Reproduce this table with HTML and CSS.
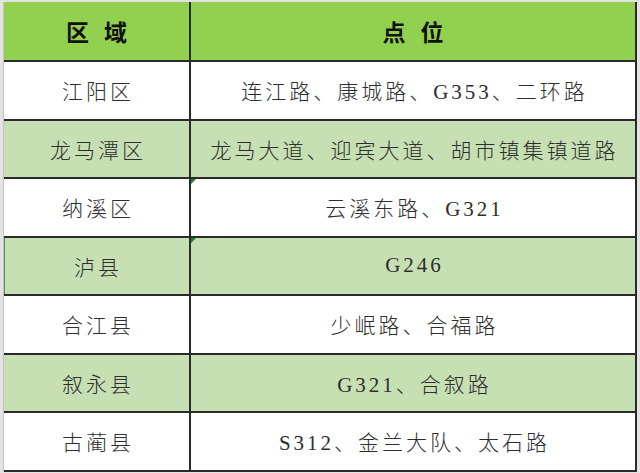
FILE: index.html
```html
<!DOCTYPE html>
<html lang="zh-CN">
<head>
<meta charset="utf-8">
<title>区域点位</title>
<link rel="stylesheet" href="styles.css">
</head>
<body>
<div class="sheet">
  <div class="grid">
    <div class="cell head">区 域</div>
    <div class="cell head">点 位</div>

    <div class="cell">江阳区</div>
    <div class="cell">连江路、康城路、G353、二环路</div>

    <div class="cell alt">龙马潭区</div>
    <div class="cell alt">龙马大道、迎宾大道、胡市镇集镇道路</div>

    <div class="cell">纳溪区</div>
    <div class="cell flag">云溪东路、G321</div>

    <div class="cell alt selected">泸县</div>
    <div class="cell alt flag">G246</div>

    <div class="cell">合江县</div>
    <div class="cell">少岷路、合福路</div>

    <div class="cell alt">叙永县</div>
    <div class="cell alt">G321、合叙路</div>

    <div class="cell">古蔺县</div>
    <div class="cell">S312、金兰大队、太石路</div>
  </div>
</div>
</body>
</html>
```
FILE: styles.css
```css
html, body {
  margin: 0;
  padding: 0;
}
body {
  background: #e3e3e3;
  width: 640px;
  height: 473px;
  overflow: hidden;
}
.sheet {
  padding: 2px 3px 0 3px;
}
.grid {
  display: grid;
  grid-template-columns: 185px 444px;
  grid-template-rows: 58px repeat(7, 56.5px);
  gap: 2px;
  padding: 0 2px 2px 0;
  background: #2a2a2a;
  border-left: 1px solid #c4c4c4;
  width: max-content;
}
.cell {
  display: flex;
  align-items: center;
  justify-content: center;
  background: #ffffff;
  color: #2e2e2e;
  font-family: "Liberation Serif", "Noto Sans CJK SC", serif;
  font-size: 21px;
  font-weight: 300;
  letter-spacing: 3px;
  padding-left: 3px;
  position: relative;
}
.cell.alt {
  background: #c6e0b4;
}
.cell.head {
  background: #92d050;
  color: #111;
  font-family: "Noto Sans CJK SC", sans-serif;
  font-weight: 700;
  font-size: 23px;
  letter-spacing: 5px;
  padding-left: 5px;
  padding-bottom: 1px;
}
.cell.selected {
  box-shadow: inset 1px 0 0 #3f9b3f;
}
.cell.flag::before {
  content: "";
  position: absolute;
  left: 0;
  top: 0;
  width: 0;
  height: 0;
  border-top: 5px solid #1f7a35;
  border-right: 5px solid transparent;
}
```
